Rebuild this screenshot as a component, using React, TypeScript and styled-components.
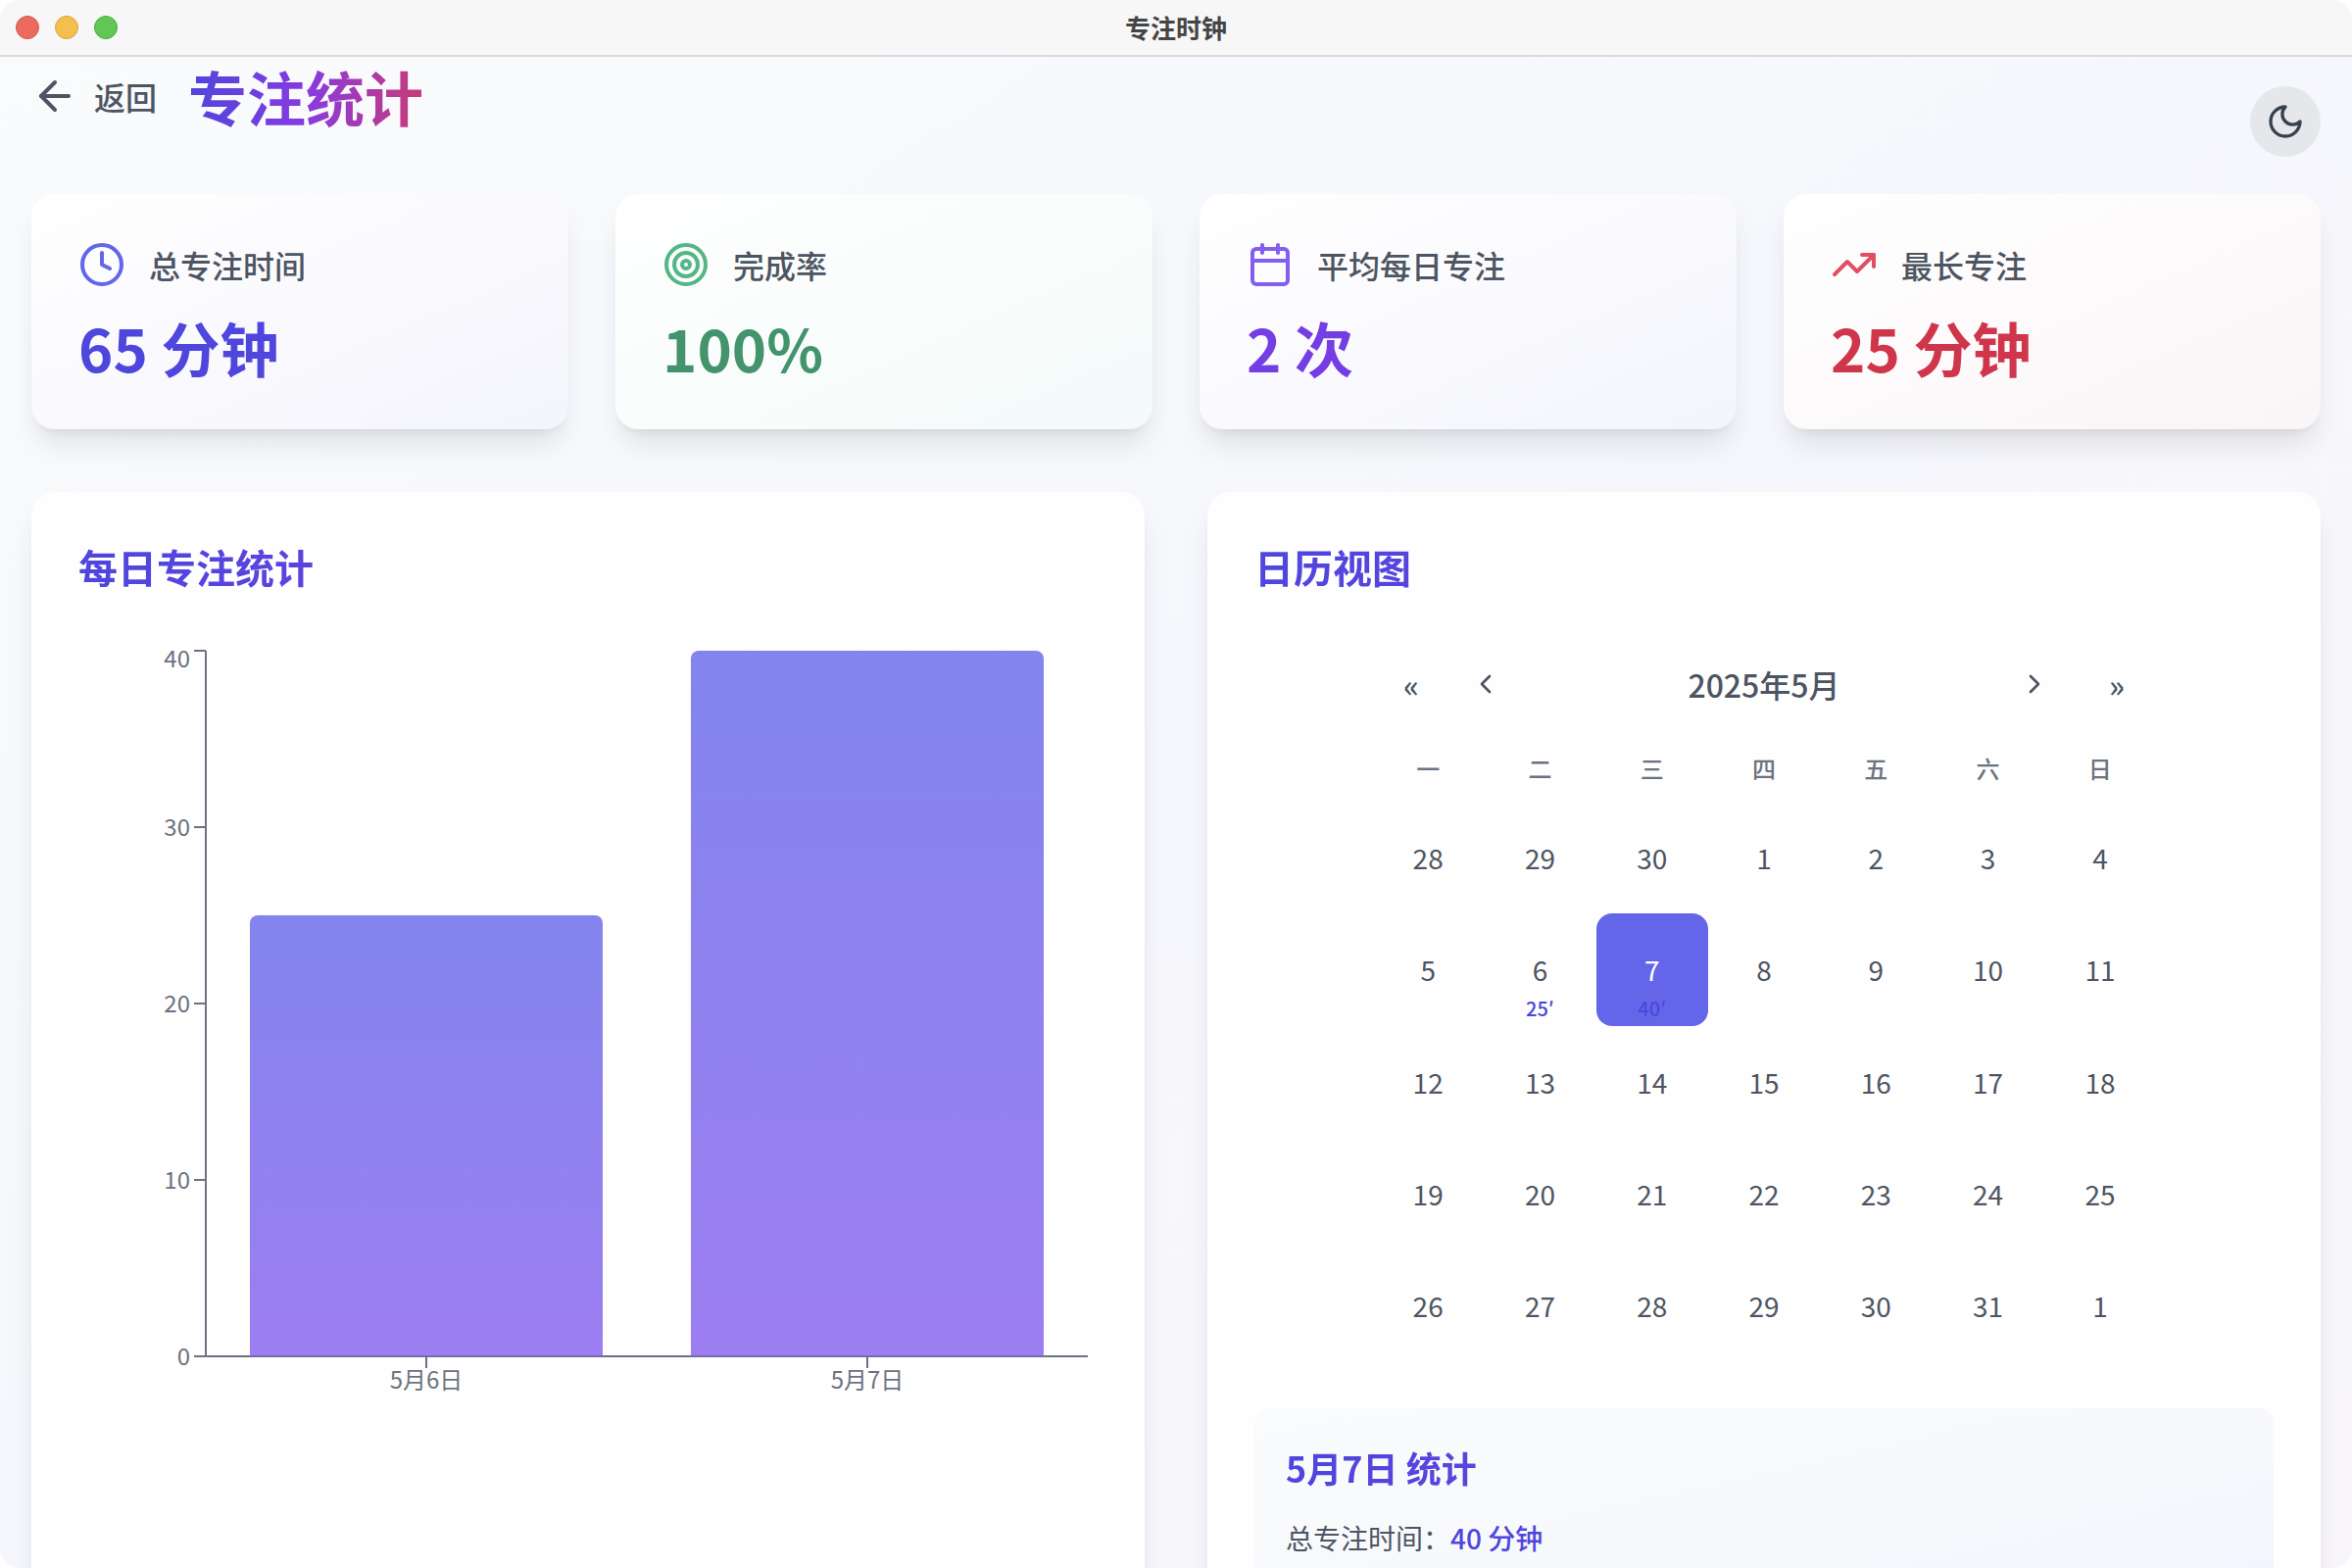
import React, { useState } from "react";
import styled, { createGlobalStyle } from "styled-components";
import { ArrowLeft, Calendar, ChevronLeft, ChevronRight, Clock, Target, TrendingUp } from "lucide-react";

const color = {
  text: "#4d5562",
  muted: "#6c727f",
  indigo: "#4e46dd",
  indigoLight: "#6466e9",
  violet: "#743ee4",
  violetLight: "#845eee",
  purple: "#883ae1",
  pink: "#c93b76",
  green: "#43946c",
  greenLight: "#55b685",
  rose: "#cf364c",
  roseLight: "#e14f62",
};

const GlobalStyle = createGlobalStyle`
  *, *::before, *::after { box-sizing: border-box; }
  body {
    margin: 0;
    background: #fff;
    color: ${color.text};
    font-family: "Noto Sans CJK SC", "Noto Sans", sans-serif;
  }
  h1, h2, h3, p { margin: 0; }
  button { border: 0; padding: 0; background: none; color: inherit; font: inherit; cursor: pointer; }
  svg { display: block; }
`;

const Window = styled.div`
  display: flex;
  flex-direction: column;
  height: 100vh;
  overflow: hidden;
  border-radius: 20px;
  background: linear-gradient(to bottom right, #fafbfc, #f6f7fc 50%, #f8f6fa);
`;

const TitleBar = styled.div`
  display: grid;
  grid-template-columns: 1fr auto 1fr;
  align-items: center;
  flex: none;
  height: 58px;
  padding: 0 16px;
  background: #f7f7f7;
  border-bottom: 2px solid #dadadc;
`;

const Lights = styled.div`
  display: flex;
  gap: 16px;
`;

const Light = styled.button<{ $fill: string; $edge: string }>`
  width: 24px;
  height: 24px;
  border: 1px solid ${(p) => p.$edge};
  border-radius: 50%;
  background: ${(p) => p.$fill};
`;

const WindowTitle = styled.span`
  font-size: 26px;
  line-height: 40px;
  font-weight: 700;
  color: #454545;
`;

const Scroll = styled.div`
  flex: 1;
  min-height: 0;
  overflow-y: auto;
  scrollbar-width: none;
`;

const Header = styled.header`
  display: flex;
  align-items: flex-start;
  justify-content: space-between;
  padding: 0 32px 38px;
`;

const HeaderStart = styled.div`
  display: flex;
  align-items: center;
  gap: 32px;
`;

const BackButton = styled.button`
  display: flex;
  align-items: center;
  gap: 16px;
  font-size: 32px;
  line-height: 48px;
  font-weight: 500;
`;

const PageTitle = styled.h1`
  font-size: 60px;
  line-height: 80px;
  font-weight: 700;
  color: transparent;
  background: linear-gradient(to right, ${color.indigo}, ${color.purple}, ${color.pink});
  background-clip: text;
  -webkit-background-clip: text;
`;

const ThemeButton = styled.button`
  display: grid;
  place-items: center;
  width: 72px;
  height: 72px;
  margin-top: 30px;
  border-radius: 50%;
  background: #e5e7eb;
  color: #384150;
`;

const Main = styled.main`
  display: grid;
  gap: 64px;
  padding: 0 32px 64px;
`;

const Stats = styled.section`
  display: grid;
  grid-template-columns: repeat(4, 1fr);
  gap: 48px;
`;

const shadow = "0 20px 30px -6px rgba(0, 0, 0, 0.1), 0 8px 12px -8px rgba(0, 0, 0, 0.1)";

const StatCard = styled.article<{ $tint: string }>`
  display: grid;
  gap: 24px;
  padding: 48px;
  border-radius: 24px;
  background: linear-gradient(to bottom right, #fff, ${(p) => p.$tint});
  box-shadow: ${shadow};
`;

const StatHead = styled.div<{ $color: string }>`
  display: flex;
  align-items: center;
  gap: 24px;

  svg { color: ${(p) => p.$color}; }
`;

const StatLabel = styled.h2`
  font-size: 32px;
  line-height: 48px;
  font-weight: 500;
`;

const StatValue = styled.p<{ $color: string }>`
  font-size: 60px;
  line-height: 72px;
  font-weight: 700;
  color: ${(p) => p.$color};
`;

const Panels = styled.div`
  display: grid;
  grid-template-columns: repeat(2, 1fr);
  gap: 64px;
`;

const Panel = styled.section`
  display: flex;
  flex-direction: column;
  gap: 48px;
  padding: 48px;
  border-radius: 24px;
  background: #fefefe;
  box-shadow: ${shadow};
`;

const PanelTitle = styled.h2`
  font-size: 40px;
  line-height: 56px;
  font-weight: 700;
  color: transparent;
  background: linear-gradient(to right, ${color.indigo}, ${color.purple});
  background-clip: text;
  -webkit-background-clip: text;
`;

const Chart = styled.svg`
  width: 100%;
  height: auto;

  line { stroke: ${color.muted}; stroke-width: 2; }
  text { fill: ${color.muted}; font-size: 24px; }
`;

const CalendarBox = styled.div`
  width: 100%;
  max-width: 800px;
  margin: 0 auto;
`;

const CalendarNav = styled.div`
  display: flex;
  align-items: center;
  height: 88px;
  margin-bottom: 8px;
`;

const NavButton = styled.button`
  width: 80px;
  height: 88px;
  padding: 0 20px;
  font-size: 32px;
  line-height: 48px;
  font-weight: 500;
`;

const Month = styled.button`
  flex: 1;
  height: 88px;
  font-size: 32px;
  line-height: 48px;
  font-weight: 500;
`;

const Week = styled.div`
  display: grid;
  grid-template-columns: repeat(7, 1fr);
`;

const Weekday = styled.div`
  padding: 16px 0;
  text-align: center;
  font-size: 24px;
  line-height: 36px;
  font-weight: 500;
  color: ${color.muted};
`;

const Day = styled.button<{ $selected: boolean }>`
  position: relative;
  aspect-ratio: 1;
  border-radius: 16px;
  font-size: 28px;
  line-height: 40px;
  color: ${(p) => (p.$selected ? "#fff" : color.text)};
  background: ${(p) => (p.$selected ? color.indigoLight : "transparent")};
`;

const Minutes = styled.span`
  position: absolute;
  inset: auto 0 4px;
  font-size: 20px;
  line-height: 28px;
  font-weight: 500;
  color: ${color.indigo};
`;

const Detail = styled.section`
  display: grid;
  align-content: start;
  gap: 24px;
  min-height: 240px;
  padding: 32px;
  border-radius: 16px;
  background: linear-gradient(to bottom right, #fafbfc, #f6f8fc 60%, #f0f4ff);
`;

const DetailTitle = styled(PanelTitle).attrs({ as: "h3" })`
  font-size: 36px;
`;

const DetailLine = styled.p`
  font-size: 28px;
  line-height: 40px;

  strong { font-weight: 500; color: ${color.indigo}; }
`;

const stats = [
  { label: "总专注时间", value: "65 分钟", Icon: Clock, icon: color.indigoLight, text: color.indigo, tint: "#f4f4fc" },
  { label: "完成率", value: "100%", Icon: Target, icon: color.greenLight, text: color.green, tint: "#f3faf9" },
  { label: "平均每日专注", value: "2 次", Icon: Calendar, icon: color.violetLight, text: color.violet, tint: "#f4f5fc" },
  { label: "最长专注", value: "25 分钟", Icon: TrendingUp, icon: color.roseLight, text: color.rose, tint: "#faf5f6" },
];

const daily = [
  { day: "5月6日", minutes: 25 },
  { day: "5月7日", minutes: 40 },
];

const weekdays = ["一", "二", "三", "四", "五", "六", "日"];
const days = Array.from({ length: 35 }, (_, i) => {
  const n = i - 2;
  if (n < 1) return { key: `apr-${30 + n}`, n: 30 + n };
  if (n > 31) return { key: `jun-${n - 31}`, n: n - 31 };
  return { key: `may-${n}`, n };
});
const focus: Record<string, number> = { "may-6": 25, "may-7": 40 };

function MoonIcon() {
  return (
    <svg width="40" height="40" viewBox="0 0 24 24" fill="none" stroke="currentColor" strokeWidth="2" strokeLinecap="round" strokeLinejoin="round" aria-hidden="true">
      <path d="M12 3a6 6 0 0 0 9 9 9 9 0 1 1-9-9Z" />
    </svg>
  );
}

function DailyChart() {
  const left = 130;
  const top = 10;
  const bottom = 730;
  const band = 450;
  const bar = 360;
  const max = 40;
  const y = (v: number) => bottom - (v / max) * (bottom - top);
  return (
    <Chart viewBox="0 0 1040 800" role="img" aria-label="每日专注统计">
      <defs>
        <linearGradient id="bar" x1="0" y1="0" x2="0" y2="1">
          <stop offset="0" stopColor={color.indigoLight} stopOpacity="0.8" />
          <stop offset="1" stopColor={color.violetLight} stopOpacity="0.8" />
        </linearGradient>
      </defs>
      <line x1={left} y1={bottom} x2={left + band * 2} y2={bottom} />
      <line x1={left} y1={top} x2={left} y2={bottom} />
      {[0, 10, 20, 30, 40].map((v) => (
        <g key={v}>
          <line x1={left - 12} y1={y(v)} x2={left} y2={y(v)} />
          <text x={left - 16} y={Math.max(y(v), 18) + 9} textAnchor="end">{v}</text>
        </g>
      ))}
      {daily.map(({ day, minutes }, i) => {
        const x = left + band * i + (band - bar) / 2;
        const t = y(minutes);
        return (
          <g key={day}>
            <line x1={x + bar / 2} y1={bottom} x2={x + bar / 2} y2={bottom + 12} />
            <text x={x + bar / 2} y={bottom + 33} textAnchor="middle">{day}</text>
            <path
              fill="url(#bar)"
              d={`M${x},${bottom} V${t + 8} a8,8 0 0 1 8,-8 H${x + bar - 8} a8,8 0 0 1 8,8 V${bottom} Z`}
            />
          </g>
        );
      })}
    </Chart>
  );
}

export default function App() {
  const [selected, setSelected] = useState("may-7");
  return (
    <>
      <GlobalStyle />
      <Window>
        <TitleBar>
          <Lights>
            <Light $fill="#ec6a5e" $edge="#d35549" aria-label="关闭" />
            <Light $fill="#f4bf4f" $edge="#d9a33c" aria-label="最小化" />
            <Light $fill="#61c654" $edge="#4dab3f" aria-label="缩放" />
          </Lights>
          <WindowTitle>专注时钟</WindowTitle>
        </TitleBar>
        <Scroll>
          <Header>
            <HeaderStart>
              <BackButton>
                <ArrowLeft size={48} />
                返回
              </BackButton>
              <PageTitle>专注统计</PageTitle>
            </HeaderStart>
            <ThemeButton aria-label="切换深色模式">
              <MoonIcon />
            </ThemeButton>
          </Header>
          <Main>
            <Stats>
              {stats.map(({ label, value, Icon, icon, text, tint }) => (
                <StatCard key={label} $tint={tint}>
                  <StatHead $color={icon}>
                    <Icon size={48} />
                    <StatLabel>{label}</StatLabel>
                  </StatHead>
                  <StatValue $color={text}>{value}</StatValue>
                </StatCard>
              ))}
            </Stats>
            <Panels>
              <Panel>
                <PanelTitle>每日专注统计</PanelTitle>
                <DailyChart />
              </Panel>
              <Panel>
                <PanelTitle>日历视图</PanelTitle>
                <CalendarBox>
                  <CalendarNav>
                    <NavButton aria-label="上一年">«</NavButton>
                    <NavButton aria-label="上个月"><ChevronLeft size={32} /></NavButton>
                    <Month>2025年5月</Month>
                    <NavButton aria-label="下个月"><ChevronRight size={32} /></NavButton>
                    <NavButton aria-label="下一年">»</NavButton>
                  </CalendarNav>
                  <Week>
                    {weekdays.map((d) => <Weekday key={d}>{d}</Weekday>)}
                  </Week>
                  <Week>
                    {days.map(({ key, n }) => (
                      <Day key={key} $selected={key === selected} onClick={() => setSelected(key)}>
                        {n}
                        {focus[key] && <Minutes>{focus[key]}′</Minutes>}
                      </Day>
                    ))}
                  </Week>
                </CalendarBox>
                <Detail>
                  <DetailTitle>5月7日 统计</DetailTitle>
                  <DetailLine>总专注时间：<strong>40 分钟</strong></DetailLine>
                </Detail>
              </Panel>
            </Panels>
          </Main>
        </Scroll>
      </Window>
    </>
  );
}
